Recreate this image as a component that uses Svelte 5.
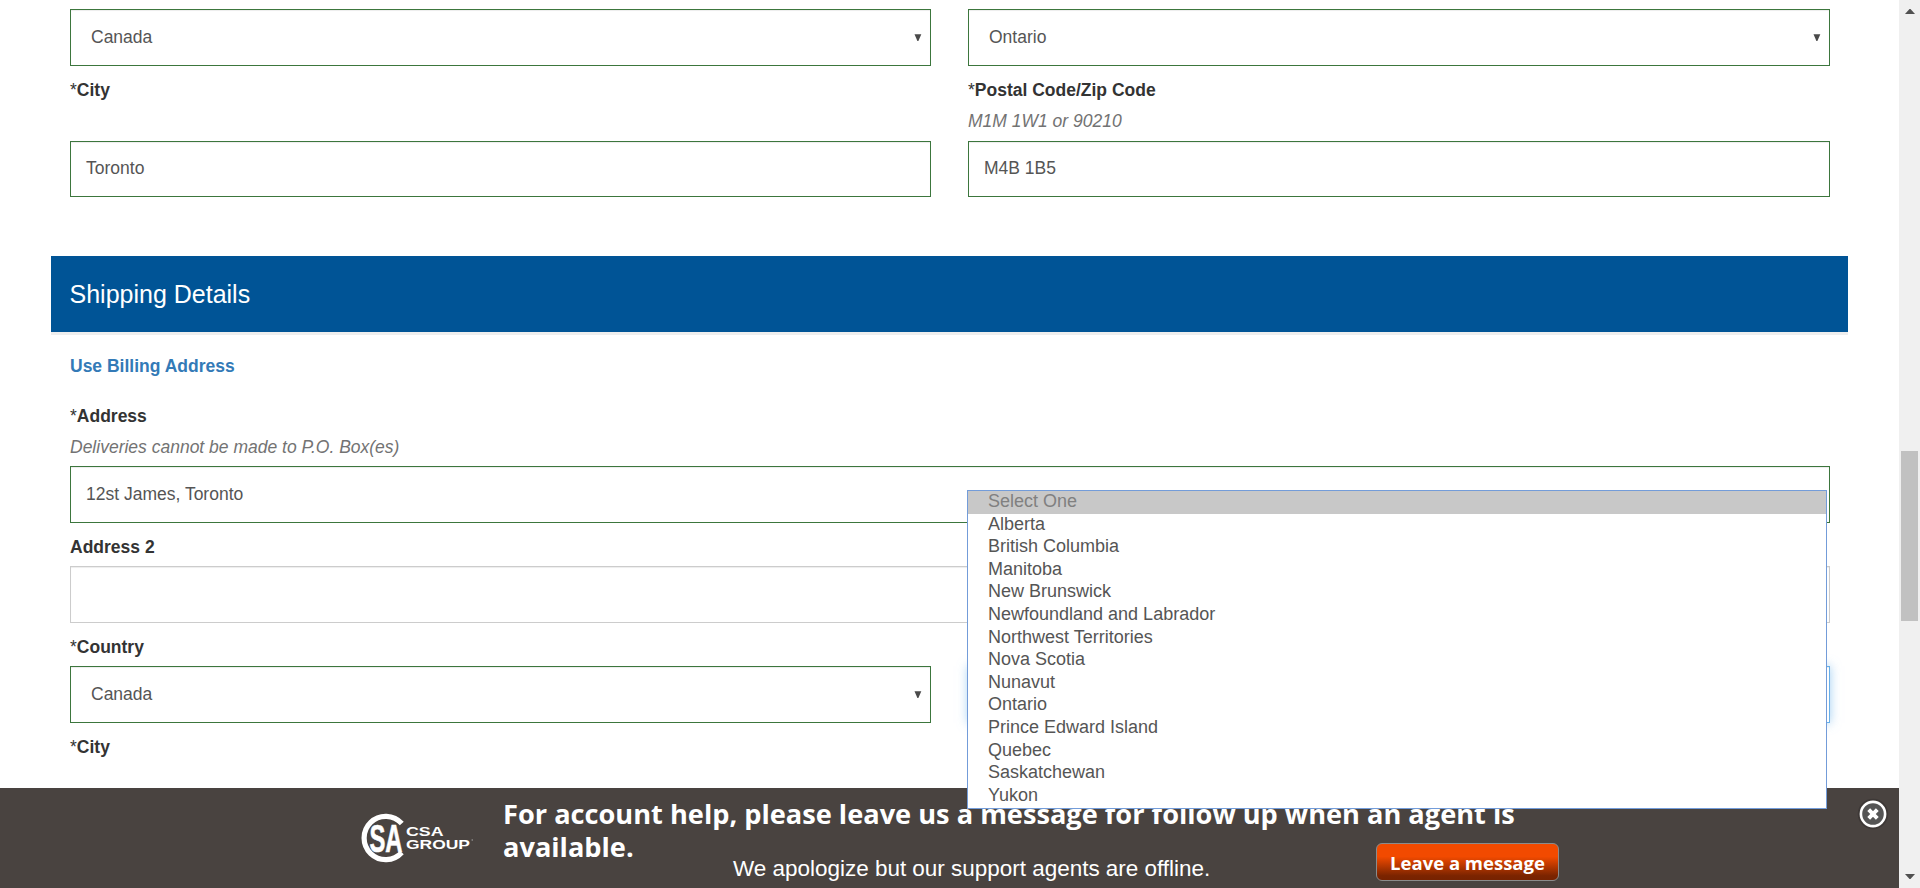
<script>
  const provinces = [
    'Select One', 'Alberta', 'British Columbia', 'Manitoba', 'New Brunswick',
    'Newfoundland and Labrador', 'Northwest Territories', 'Nova Scotia', 'Nunavut',
    'Ontario', 'Prince Edward Island', 'Quebec', 'Saskatchewan', 'Yukon'
  ];
</script>

{#snippet select(value)}
  <div class="control select valid">
    <span>{value}</span>
    <svg class="caret" width="8" height="8" viewBox="0 0 8 8"><path d="M0.5 0.2H7.3L4.4 7H3.4Z" fill="#4a4a4a" /></svg>
  </div>
{/snippet}

{#snippet label(text, required = true)}
  <div class="label">{#if required}<span class="star">*</span>{/if}{text}</div>
{/snippet}

<div class="window">
  <main>
    <div class="row first">
      {@render select('Canada')}
      {@render select('Ontario')}
    </div>
    <div class="row city">
      <div class="field">
        {@render label('City')}
        <div class="control short valid push">Toronto</div>
      </div>
      <div class="field">
        {@render label('Postal Code/Zip Code')}
        <div class="hint">M1M 1W1 or 90210</div>
        <div class="control short valid push">M4B 1B5</div>
      </div>
    </div>

    <h2>Shipping Details</h2>

    <section>
      <a class="billing" href="#billing">Use Billing Address</a>
      {@render label('Address')}
      <div class="hint">Deliveries cannot be made to P.O. Box(es)</div>
      <div class="control valid">12st James, Toronto</div>
      {@render label('Address 2', false)}
      <div class="control"></div>
      <div class="row">
        <div class="field">
          {@render label('Country')}
          {@render select('Canada')}
        </div>
        <div class="field province">
          <div class="control focused"></div>
          <ul class="menu">
            {#each provinces as name, i}
              <li class:chosen={i === 0}>{name}</li>
            {/each}
          </ul>
        </div>
      </div>
      {@render label('City')}
    </section>
  </main>

  <footer>
    <svg class="logo" width="114" height="50" viewBox="0 0 114 50" fill="none">
      <path d="M41.8 10.6A21.6 21.6 0 1 0 41.8 39.4" stroke="#fff" stroke-width="5.2" />
      <text class="mono" x="9.5" y="38.6" textLength="33" lengthAdjust="spacingAndGlyphs">SA</text>
      <text class="word" x="46" y="23.2" textLength="37.5" lengthAdjust="spacingAndGlyphs">CSA</text>
      <text class="word" x="46" y="36.2" textLength="64" lengthAdjust="spacingAndGlyphs">GROUP</text>
      <circle cx="112.2" cy="27" r="0.7" fill="#aaa" />
    </svg>
    <div class="notice">
      <div class="headline"><div>For account help, please leave us a message for follow up when an agent is</div><div>available.</div></div>
      <div class="apology">We apologize but our support agents are offline.</div>
    </div>
    <button class="leave">Leave a message</button>
    <svg class="close" width="34" height="34" viewBox="0 0 34 34">
      <circle cx="17" cy="17" r="15.2" fill="#3d3836" />
      <circle cx="17" cy="17" r="12.1" fill="#555" stroke="#fff" stroke-width="2.6" />
      <path d="M12.7 12.7L21.3 21.3M21.3 12.7L12.7 21.3" stroke="#fff" stroke-width="4" />
    </svg>
  </footer>

  <div class="scrollbar">
    <svg width="10" height="5" viewBox="0 0 10 5"><path d="M0 5L4.5 0H5.5L10 5Z" fill="#505050" /></svg>
    <div class="thumb"></div>
    <svg class="down" width="10" height="5" viewBox="0 0 10 5"><path d="M0 0H10L5.5 5H4.5Z" fill="#505050" /></svg>
  </div>
</div>

<style>
  :global(body) { margin: 0; overflow: hidden; background: #fff; }
  .window {
    position: relative;
    display: grid;
    grid-template: 788px 100px / 1899px 21px;
    width: 1920px;
    height: 888px;
    overflow: hidden;
    font: 17.5px/25px "Liberation Sans", Arial, sans-serif;
    color: #555;
  }
  main { padding: 9px 51px 0; }
  .row { display: grid; grid-template-columns: 861px 862px; column-gap: 37px; }
  .first, .city { padding: 0 19px; }
  .city { height: 131px; }
  .field { display: flex; flex-direction: column; }
  .control {
    box-sizing: border-box;
    height: 57px;
    padding: 15px 15px 14px;
    line-height: 25px;
    border: 1px solid #ccc;
    background: #fff;
    box-shadow: inset 0 1px 1px rgba(0, 0, 0, 0.075);
  }
  .short { height: 56px; padding-top: 14px; }
  .push { margin-top: auto; }
  .valid { border-color: #3c763d; }
  .select { display: flex; justify-content: space-between; padding: 15px 8px 14px 20px; }
  .caret { margin-top: 9px; }
  .label { padding: 12px 0 6px; font-weight: 700; color: #333; }
  .star { font-weight: 400; }
  .hint { margin: 0 0 6px; font-style: italic; color: #737373; }
  h2 {
    width: 1797px;
    height: 76px;
    margin: 59px 0 0;
    border-bottom: 3px solid #eee;
    background: #005496;
    color: #fff;
    font-size: 25px;
    font-weight: 400;
    line-height: 76px;
    text-indent: 18.5px;
  }
  section { width: 1760px; padding: 19px 19px 0; }
  .billing { display: block; height: 38px; color: #337ab7; font-weight: 700; text-decoration: none; }
  .province { position: relative; justify-content: flex-end; }
  .focused { border-color: #66afe9; box-shadow: inset 0 1px 1px rgba(0, 0, 0, 0.075), 0 0 10px rgba(102, 175, 233, 0.6); }
  .menu {
    position: absolute;
    z-index: 2;
    top: -133px;
    left: -1px;
    box-sizing: border-box;
    width: 860px;
    height: 319px;
    margin: 0;
    padding: 0;
    border: 1px solid #739cd9;
    background: #fff;
    list-style: none;
    font-size: 18px;
  }
  li { height: 22.6px; padding-left: 20px; line-height: 20px; }
  .chosen { color: #808080; background: #c8c8c8; }
  footer {
    grid-row: 2;
    display: flex;
    align-items: flex-start;
    background: #494340;
    color: #fff;
  }
  .logo { flex: none; margin: 25px 0 0 360px; }
  .mono { fill: #fff; stroke: #fff; stroke-width: 0.7px; font: 700 39px "Liberation Sans", sans-serif; }
  .word { fill: #fff; font: 700 13.5px "Liberation Sans", sans-serif; }
  .notice { width: 873px; margin-left: 29px; }
  .headline { padding-top: 9px; font: 700 27.2px/33px "Trebuchet MS", "Open Sans", sans-serif; white-space: nowrap; }
  .apology { margin: -7px 0 0 230px; font-size: 22.5px; line-height: 25px; letter-spacing: -0.02px; white-space: nowrap; }
  .leave {
    box-sizing: border-box;
    width: 183px;
    height: 38px;
    margin: 55px 0 0;
    padding: 1px 0 0;
    border: 1px solid #8b8b8b;
    border-radius: 6px;
    background: linear-gradient(#f24a00 0%, #f24a00 35%, #7b2400 88%, #762200 100%);
    color: #fff;
    font: 700 18.5px/35px "Trebuchet MS", "Open Sans", sans-serif;
    white-space: nowrap;
  }
  .close { flex: none; margin: 9px 0 0 297px; }
  .scrollbar {
    grid-area: 1 / 2 / 3 / 3;
    display: flex;
    flex-direction: column;
    align-items: center;
    box-sizing: border-box;
    padding: 9px 0;
    background: #f0f0f0;
  }
  .thumb { width: 17px; height: 170px; margin-top: 437px; background: #c1c1c1; }
  .down { margin-top: auto; }
</style>
